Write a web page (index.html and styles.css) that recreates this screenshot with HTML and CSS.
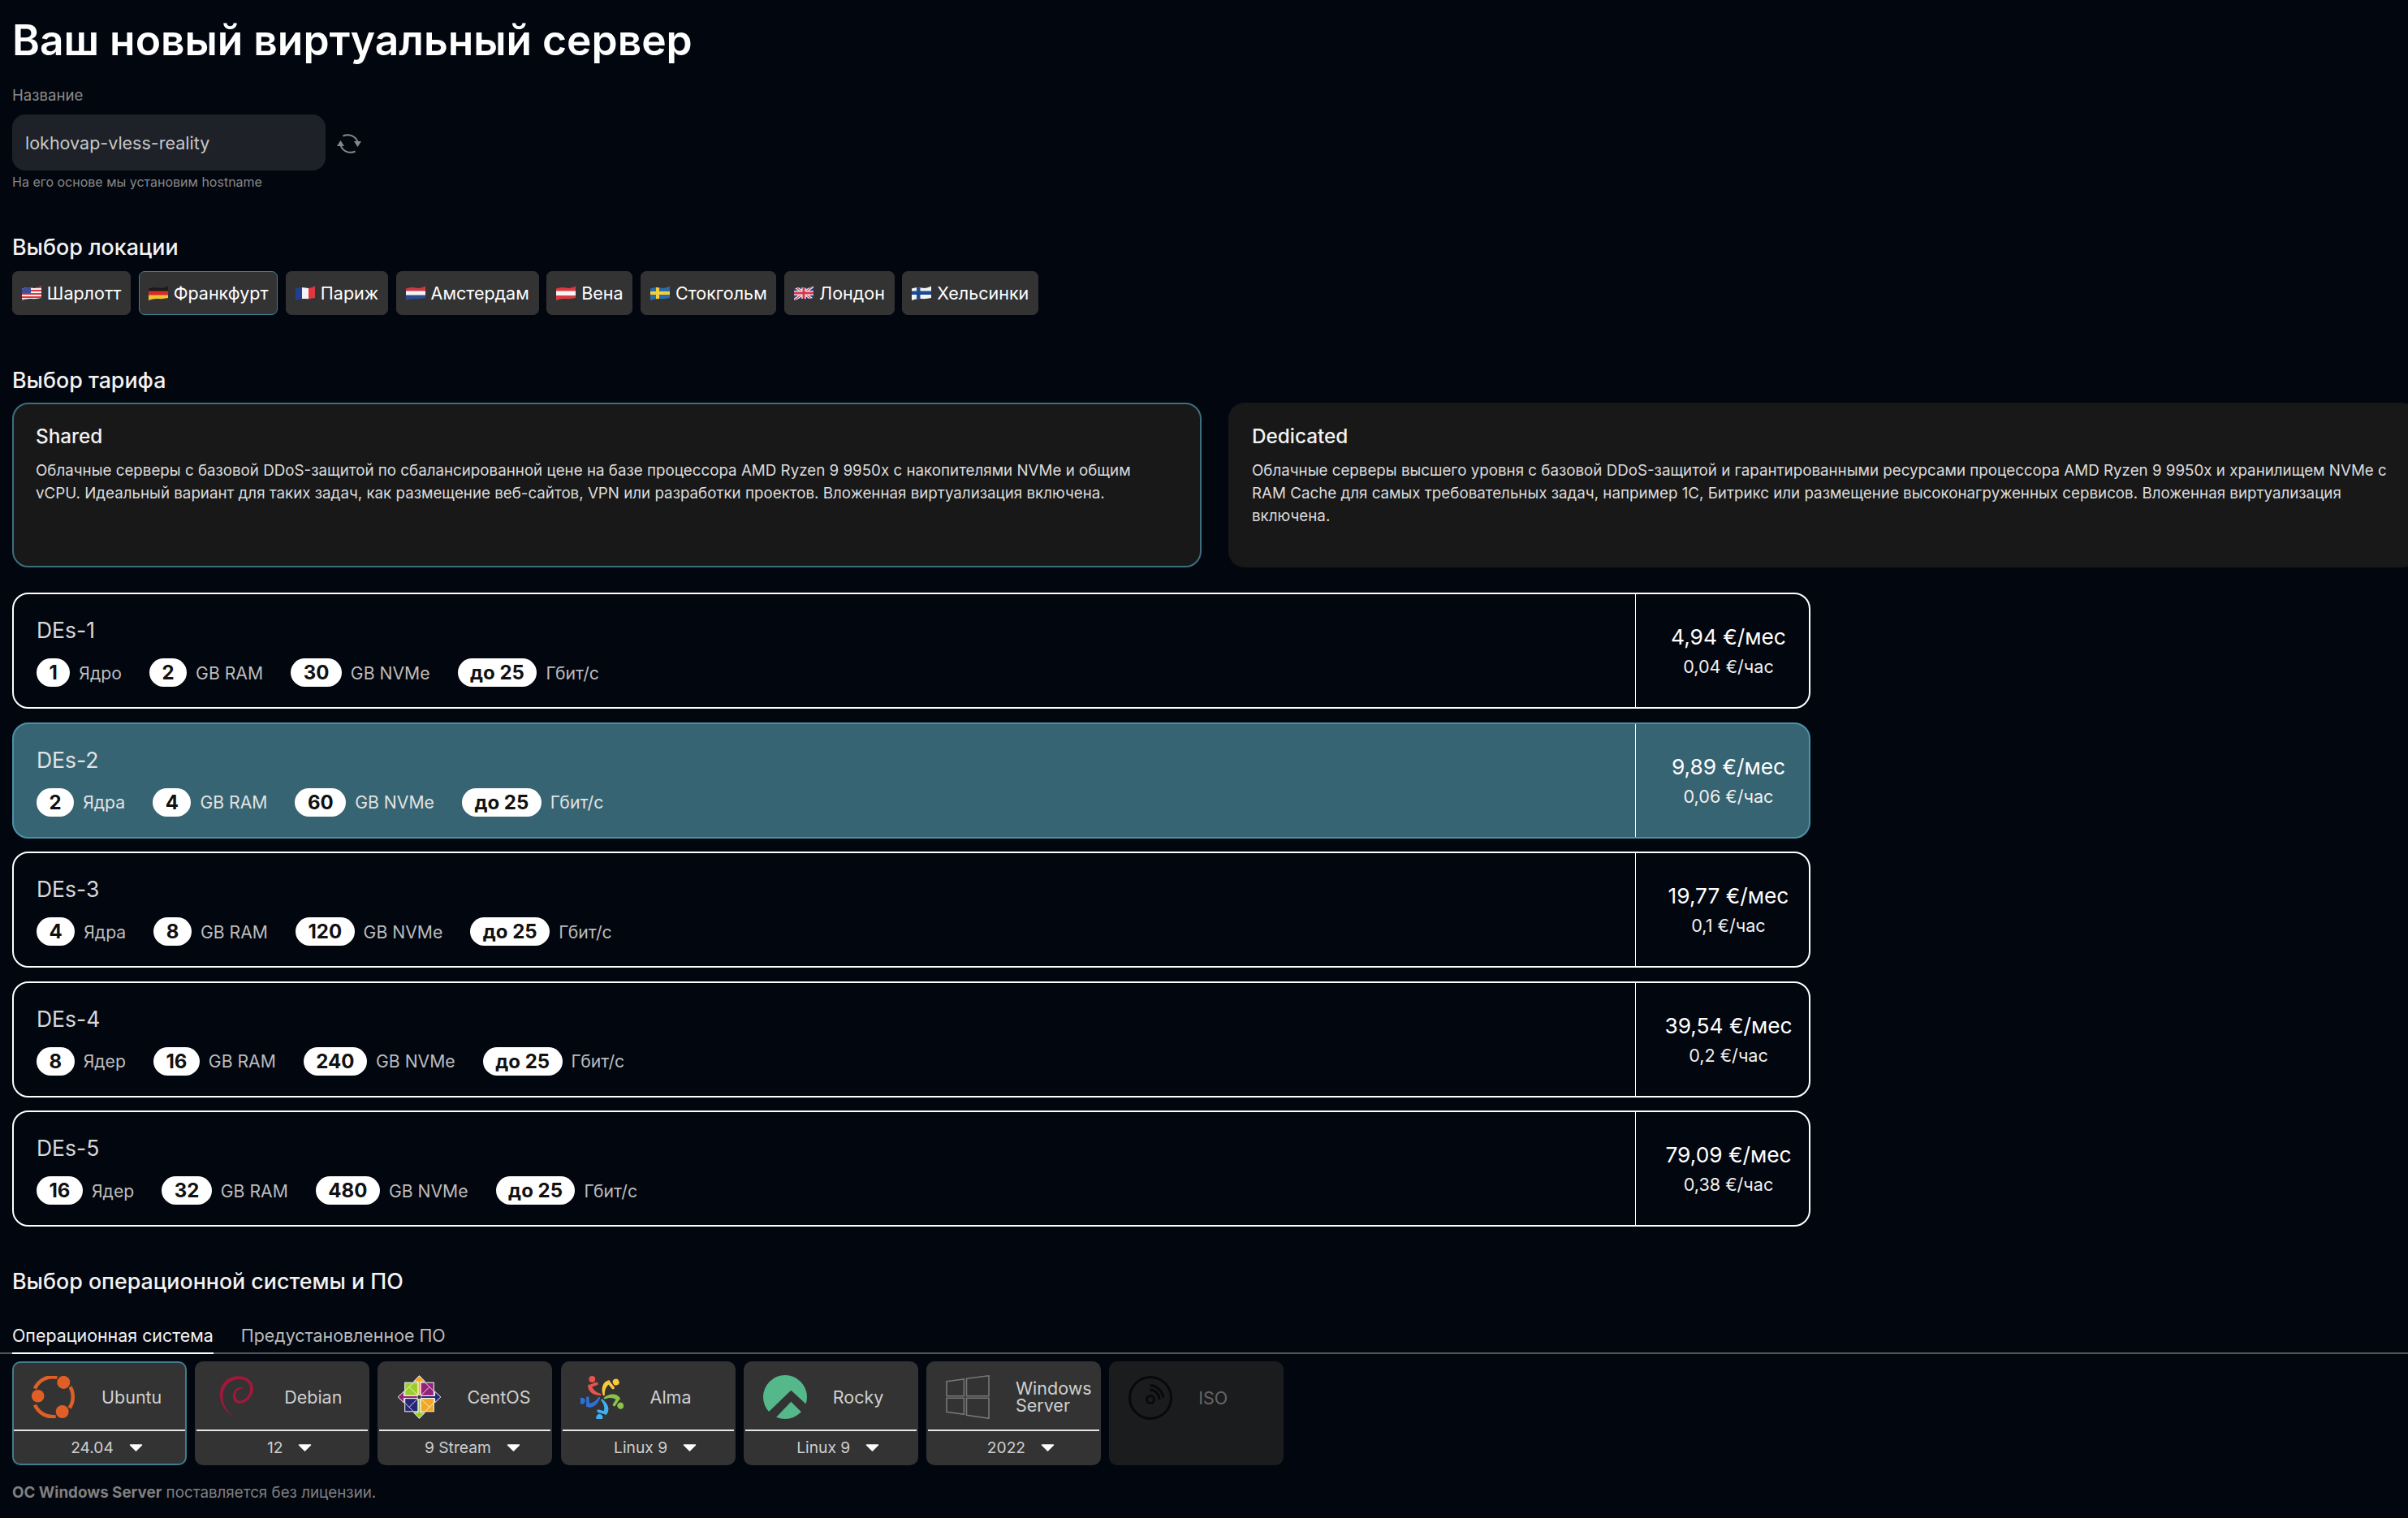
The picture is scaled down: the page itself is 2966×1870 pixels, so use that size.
FILE: index.html
```html
<!DOCTYPE html>
<html lang="ru">
<head>
<meta charset="utf-8">
<title>Ваш новый виртуальный сервер</title>
<link rel="stylesheet" href="styles.css">
</head>
<body>
<svg class="defs" width="0" height="0"><defs>
<clipPath id="wave"><path d="M0 3.5Q6 1 12 2.5T24 .5V15Q18 16.5 12 16T0 18Z"/></clipPath>
</defs></svg>
<main class="page">
  <h1 class="title">Ваш новый виртуальный сервер</h1>
  <div class="field-label">Название</div>
  <div class="name-row">
    <div class="name-input">lokhovap-vless-reality</div>
    <svg class="refresh" viewBox="0 0 30 28" width="30" height="28" fill="none" stroke="#888" stroke-width="2">
      <path d="M7.500 4.500A13 13 0 0 1 25.500 12"/>
      <path d="M4.500 16A13 13 0 0 0 22.500 23.500"/>
      <path d="M0 17h9L4.500 10z" fill="#888" stroke="none"/>
      <path d="M21 11h9L25.500 18z" fill="#888" stroke="none"/>
    </svg>
  </div>
  <div class="hint">На его основе мы установим hostname</div>

  <h2 class="section section-loc">Выбор локации</h2>
  <div class="locations">
    <div class="loc"><svg class="flag" viewBox="0 0 24 18"><g clip-path="url(#wave)"><rect width="24" height="18" fill="#f3f3f3"/><path d="M0 1h24v2H0zM0 5h24v2H0zM0 9h24v2H0zM0 13h24v2H0zM0 16.500h24v2H0z" fill="#d8383f"/><rect width="11" height="9.500" fill="#3d4f97"/></g></svg>Шарлотт</div>
    <div class="loc loc-active"><svg class="flag" viewBox="0 0 24 18"><g clip-path="url(#wave)"><rect width="24" height="7" fill="#1c1c1c"/><rect y="6.500" width="24" height="5.500" fill="#d62b2b"/><rect y="11.500" width="24" height="7" fill="#f2c12e"/></g></svg>Франкфурт</div>
    <div class="loc"><svg class="flag" viewBox="0 0 24 18"><g clip-path="url(#wave)"><rect width="8" height="18" fill="#23408f"/><rect x="8" width="8" height="18" fill="#f5f5f5"/><rect x="16" width="8" height="18" fill="#e0363f"/></g></svg>Париж</div>
    <div class="loc"><svg class="flag" viewBox="0 0 24 18"><g clip-path="url(#wave)"><rect width="24" height="7" fill="#c93a45"/><rect y="6.500" width="24" height="5.500" fill="#f5f5f5"/><rect y="11.500" width="24" height="7" fill="#2f4b8f"/></g></svg>Амстердам</div>
    <div class="loc"><svg class="flag" viewBox="0 0 24 18"><g clip-path="url(#wave)"><rect width="24" height="18" fill="#db3a3f"/><rect y="6.500" width="24" height="5.500" fill="#f5f5f5"/></g></svg>Вена</div>
    <div class="loc"><svg class="flag" viewBox="0 0 24 18"><g clip-path="url(#wave)"><rect width="24" height="18" fill="#2a6cab"/><rect x="7" width="4" height="18" fill="#f5cf3a"/><rect y="7" width="24" height="4" fill="#f5cf3a"/></g></svg>Стокгольм</div>
    <div class="loc"><svg class="flag" viewBox="0 0 24 18"><g clip-path="url(#wave)"><rect width="24" height="18" fill="#2b3f86"/><path d="M0 0L24 18M24 0L0 18" stroke="#f2f2f2" stroke-width="3.500"/><path d="M0 0L24 18M24 0L0 18" stroke="#d8384a" stroke-width="1.200"/><path d="M12 0V18M0 9H24" stroke="#f2f2f2" stroke-width="5.500"/><path d="M12 0V18M0 9H24" stroke="#d8384a" stroke-width="3"/></g></svg>Лондон</div>
    <div class="loc"><svg class="flag" viewBox="0 0 24 18"><g clip-path="url(#wave)"><rect width="24" height="18" fill="#f3f3f3"/><rect x="6" width="4.500" height="18" fill="#1f4a8f"/><rect y="6.500" width="24" height="4.500" fill="#1f4a8f"/></g></svg>Хельсинки</div>
  </div>

  <h2 class="section section-tariff">Выбор тарифа</h2>
  <div class="tariffs">
    <div class="tariff tariff-active">
      <div class="tariff-name">Shared</div>
      <p class="tariff-text">Облачные серверы с базовой DDoS-защитой по сбалансированной цене на базе процессора AMD Ryzen 9 9950x с накопителями NVMe и общим vCPU. Идеальный вариант для таких задач, как размещение веб-сайтов, VPN или разработки проектов. Вложенная виртуализация включена.</p>
    </div>
    <div class="tariff">
      <div class="tariff-name">Dedicated</div>
      <p class="tariff-text">Облачные серверы высшего уровня с базовой DDoS-защитой и гарантированными ресурсами процессора AMD Ryzen 9 9950x и хранилищем NVMe с RAM Cache для самых требовательных задач, например 1С, Битрикс или размещение высоконагруженных сервисов. Вложенная виртуализация включена.</p>
    </div>
  </div>

  <div class="plans">
    <div class="plan">
      <div class="plan-main">
        <div class="plan-name">DEs-1</div>
        <div class="specs">
          <div class="spec"><span class="pill">1</span>Ядро</div>
          <div class="spec"><span class="pill">2</span>GB RAM</div>
          <div class="spec"><span class="pill">30</span>GB NVMe</div>
          <div class="spec"><span class="pill">до 25</span>Гбит/с</div>
        </div>
      </div>
      <div class="plan-price"><div class="month">4,94 €/мес</div><div class="hour">0,04 €/час</div></div>
    </div>
    <div class="plan plan-active">
      <div class="plan-main">
        <div class="plan-name">DEs-2</div>
        <div class="specs">
          <div class="spec"><span class="pill">2</span>Ядра</div>
          <div class="spec"><span class="pill">4</span>GB RAM</div>
          <div class="spec"><span class="pill">60</span>GB NVMe</div>
          <div class="spec"><span class="pill">до 25</span>Гбит/с</div>
        </div>
      </div>
      <div class="plan-price"><div class="month">9,89 €/мес</div><div class="hour">0,06 €/час</div></div>
    </div>
    <div class="plan">
      <div class="plan-main">
        <div class="plan-name">DEs-3</div>
        <div class="specs">
          <div class="spec"><span class="pill">4</span>Ядра</div>
          <div class="spec"><span class="pill">8</span>GB RAM</div>
          <div class="spec"><span class="pill">120</span>GB NVMe</div>
          <div class="spec"><span class="pill">до 25</span>Гбит/с</div>
        </div>
      </div>
      <div class="plan-price"><div class="month">19,77 €/мес</div><div class="hour">0,1 €/час</div></div>
    </div>
    <div class="plan">
      <div class="plan-main">
        <div class="plan-name">DEs-4</div>
        <div class="specs">
          <div class="spec"><span class="pill">8</span>Ядер</div>
          <div class="spec"><span class="pill">16</span>GB RAM</div>
          <div class="spec"><span class="pill">240</span>GB NVMe</div>
          <div class="spec"><span class="pill">до 25</span>Гбит/с</div>
        </div>
      </div>
      <div class="plan-price"><div class="month">39,54 €/мес</div><div class="hour">0,2 €/час</div></div>
    </div>
    <div class="plan">
      <div class="plan-main">
        <div class="plan-name">DEs-5</div>
        <div class="specs">
          <div class="spec"><span class="pill">16</span>Ядер</div>
          <div class="spec"><span class="pill">32</span>GB RAM</div>
          <div class="spec"><span class="pill">480</span>GB NVMe</div>
          <div class="spec"><span class="pill">до 25</span>Гбит/с</div>
        </div>
      </div>
      <div class="plan-price"><div class="month">79,09 €/мес</div><div class="hour">0,38 €/час</div></div>
    </div>
  </div>

  <h2 class="section section-os">Выбор операционной системы и ПО</h2>
  <div class="tabs">
    <div class="tab tab-active">Операционная система</div>
    <div class="tab">Предустановленное ПО</div>
  </div>
  <div class="os-list">
    <div class="os os-active">
      <div class="os-top">
        <div class="os-icon"><svg viewBox="0 0 54 52" width="54" height="52" fill="none" stroke="#e05f26" stroke-width="4.500"><path d="M47.500 13.450A24.500 24.500 0 0 1 46.600 39.400"/><path d="M29.700 50A24.500 24.500 0 0 1 3.900 35.700"/><path d="M3.900 15.700A24.500 24.500 0 0 1 31.400 1.700"/><g fill="#e05f26" stroke="none"><circle cx="7.700" cy="24.700" r="7.800"/><circle cx="39.300" cy="7.900" r="8"/><circle cx="37.700" cy="44" r="8"/></g></svg></div>
        <div class="os-name">Ubuntu</div>
      </div>
      <div class="os-ver">24.04<svg class="caret" viewBox="0 0 17 9" width="17" height="9"><path d="M1.500 1h14L8.500 8z" fill="#fff" stroke="#fff" stroke-width="1.500" stroke-linejoin="round"/></svg></div>
    </div>
    <div class="os">
      <div class="os-top">
        <div class="os-icon"><svg viewBox="85 75 130 165" width="43" height="55"><path d="M158 236C120 225 88 190 88 148C88 105 120 78 155 78C190 78 213 100 212 125C211 155 185 180 160 180C145 180 135 165 136 150C137 135 150 120 165 120C172 120 178 125 178 125C170 122 155 125 148 137C142 148 146 165 160 170C180 172 200 150 200 125C200 100 180 88 155 90C125 92 100 115 98 150C96 190 125 225 158 236Z" fill="#a3183a"/></svg></div>
        <div class="os-name">Debian</div>
      </div>
      <div class="os-ver">12<svg class="caret" viewBox="0 0 17 9" width="17" height="9"><path d="M1.500 1h14L8.500 8z" fill="#fff" stroke="#fff" stroke-width="1.500" stroke-linejoin="round"/></svg></div>
    </div>
    <div class="os">
      <div class="os-top">
        <div class="os-icon"><svg viewBox="-80 -82 160 164" width="53" height="54" stroke="#fff" stroke-width="3">
          <g><polygon points="0,-80 -21,-58 -21,-58 -5,-58 -5,-5 0,0 5,-5 5,-58 21,-58" fill="#efa724"/><rect x="-54" y="-54" width="49" height="49" fill="#9ccd2a"/><path d="M-54 -22L-22 -54M-5 -5L-38 -38" fill="none" stroke-width="2.500"/></g>
          <g transform="rotate(90)"><polygon points="0,-80 -21,-58 -21,-58 -5,-58 -5,-5 0,0 5,-5 5,-58 21,-58" fill="#262577"/><rect x="-54" y="-54" width="49" height="49" fill="#932279"/><path d="M-54 -22L-22 -54M-5 -5L-38 -38" fill="none" stroke-width="2.500"/></g>
          <g transform="rotate(180)"><polygon points="0,-80 -21,-58 -21,-58 -5,-58 -5,-5 0,0 5,-5 5,-58 21,-58" fill="#9ccd2a"/><rect x="-54" y="-54" width="49" height="49" fill="#efa724"/><path d="M-54 -22L-22 -54M-5 -5L-38 -38" fill="none" stroke-width="2.500"/></g>
          <g transform="rotate(270)"><polygon points="0,-80 -21,-58 -21,-58 -5,-58 -5,-5 0,0 5,-5 5,-58 21,-58" fill="#932279"/><rect x="-54" y="-54" width="49" height="49" fill="#262577"/><path d="M-54 -22L-22 -54M-5 -5L-38 -38" fill="none" stroke-width="2.500"/></g>
          <rect x="-7" y="-7" width="14" height="14" fill="#333" stroke="#fff" stroke-width="2"/>
        </svg></div>
        <div class="os-name">CentOS</div>
      </div>
      <div class="os-ver">9 Stream<svg class="caret" viewBox="0 0 17 9" width="17" height="9"><path d="M1.500 1h14L8.500 8z" fill="#fff" stroke="#fff" stroke-width="1.500" stroke-linejoin="round"/></svg></div>
    </div>
    <div class="os">
      <div class="os-top">
        <div class="os-icon"><svg viewBox="-80 -82 160 164" width="53" height="54" fill="none" stroke-linecap="round">
          <g stroke="#e8534c" fill="#e8534c"><circle cx="-37" cy="-67" r="12" stroke="none"/><path d="M-3 -6C-30 -4 -56 -20 -52 -46L-38 -46C-38 -30 -22 -16 -3 -12Z" stroke="none"/><path d="M-42 -42L-20 -50" stroke-width="11" fill="none"/></g>
          <g transform="rotate(72)" stroke="#fbc83c" fill="#fbc83c"><circle cx="-37" cy="-67" r="12" stroke="none"/><path d="M-3 -6C-30 -4 -56 -20 -52 -46L-38 -46C-38 -30 -22 -16 -3 -12Z" stroke="none"/><path d="M-42 -42L-20 -50" stroke-width="11" fill="none"/></g>
          <g transform="rotate(144)" stroke="#8bc34a" fill="#8bc34a"><circle cx="-37" cy="-67" r="12" stroke="none"/><path d="M-3 -6C-30 -4 -56 -20 -52 -46L-38 -46C-38 -30 -22 -16 -3 -12Z" stroke="none"/><path d="M-42 -42L-20 -50" stroke-width="11" fill="none"/></g>
          <g transform="rotate(216)" stroke="#3fb0f2" fill="#3fb0f2"><circle cx="-37" cy="-67" r="12" stroke="none"/><path d="M-3 -6C-30 -4 -56 -20 -52 -46L-38 -46C-38 -30 -22 -16 -3 -12Z" stroke="none"/><path d="M-42 -42L-20 -50" stroke-width="11" fill="none"/></g>
          <g transform="rotate(288)" stroke="#2f6fd8" fill="#2f6fd8"><circle cx="-37" cy="-67" r="12" stroke="none"/><path d="M-3 -6C-30 -4 -56 -20 -52 -46L-38 -46C-38 -30 -22 -16 -3 -12Z" stroke="none"/><path d="M-42 -42L-20 -50" stroke-width="11" fill="none"/></g>
        </svg></div>
        <div class="os-name">Alma</div>
      </div>
      <div class="os-ver">Linux 9<svg class="caret" viewBox="0 0 17 9" width="17" height="9"><path d="M1.500 1h14L8.500 8z" fill="#fff" stroke="#fff" stroke-width="1.500" stroke-linejoin="round"/></svg></div>
    </div>
    <div class="os">
      <div class="os-top">
        <div class="os-icon"><svg viewBox="117 74 162 162" width="54" height="54"><circle cx="198" cy="155" r="81" fill="#55b88b"/><polygon points="135,212 220,130 285,190 260,212 220,172 160,235 135,240" fill="#333"/></svg></div>
        <div class="os-name">Rocky</div>
      </div>
      <div class="os-ver">Linux 9<svg class="caret" viewBox="0 0 17 9" width="17" height="9"><path d="M1.500 1h14L8.500 8z" fill="#fff" stroke="#fff" stroke-width="1.500" stroke-linejoin="round"/></svg></div>
    </div>
    <div class="os">
      <div class="os-top">
        <div class="os-icon"><svg viewBox="0 0 54 54" width="54" height="54" fill="none" stroke="#777" stroke-width="1.600"><path d="M1 7.700L22.400 5V25.700H1z"/><path d="M25.500 4.300L53 .8V25.700H25.500z"/><path d="M1 28.300H22.400V48.300L1 45.300z"/><path d="M25.500 28.300H53V53.300L25.500 49.300z"/></svg></div>
        <div class="os-name os-name-two">Windows Server</div>
      </div>
      <div class="os-ver">2022<svg class="caret" viewBox="0 0 17 9" width="17" height="9"><path d="M1.500 1h14L8.500 8z" fill="#fff" stroke="#fff" stroke-width="1.500" stroke-linejoin="round"/></svg></div>
    </div>
    <div class="os os-disabled">
      <div class="os-top">
        <div class="os-icon"><svg viewBox="0 0 54 54" width="54" height="54" fill="none" stroke="#08090b" stroke-width="3"><circle cx="27" cy="27" r="25.500"/><circle cx="27" cy="29" r="4.500" stroke-width="2.800"/><path d="M26 17a12 12 0 0 1 12 12"/><path d="M27 11.500a18 18 0 0 1 16 15"/></svg></div>
        <div class="os-name">ISO</div>
      </div>
    </div>
  </div>
  <p class="note"><b>ОС Windows Server</b> поставляется без лицензии.</p>
</main>
</body>
</html>
```
FILE: styles.css
```css
* { box-sizing: border-box; }
html, body { margin: 0; padding: 0; background: #02060f; overflow: hidden; }
body { width: 2966px; height: 1870px; font-family: Inter, "Noto Sans", sans-serif; color: #fff; }
.defs { position: absolute; }
.page { padding: 19px 0 0 15px; width: 2966px; }
.title { margin: 0; font-size: 51.500px; line-height: 60px; font-weight: 600; }
.field-label { margin-top: 26px; font-size: 18.600px; line-height: 24px; color: #8a8a8a; }
.name-row { display: flex; align-items: center; margin-top: 12px; gap: 14px; }
.refresh { margin-top: 3px; }
.name-input { width: 386px; height: 69px; border-radius: 16px; background: #1e2128; padding: 0 16px; display: flex; align-items: center; font-size: 21.500px; color: #c8c8c8; }
.hint { margin-top: 4px; font-size: 16px; line-height: 20px; color: #888; }
.section { margin: 0; font-size: 26.800px; line-height: 34px; font-weight: 450; color: #f2f2f2; }
.section-loc { margin-top: 53px; }
.locations { display: flex; gap: 9.800px; margin-top: 13px; }
.loc { height: 54px; padding: 0 10.800px; background: #333; border: 1px solid #333; border-radius: 7px; display: flex; align-items: center; gap: 7px; font-size: 21.500px; color: #fff; }
.loc-active { border-color: #3f8090; }
.flag { width: 24px; height: 18px; flex: none; }
.section-tariff { margin-top: 63px; }
.tariffs { display: grid; grid-template-columns: 1465px 1465px; gap: 33px; margin-top: 11px; }
.tariff { height: 203px; background: #181818; border: 2px solid #181818; border-radius: 20px; padding: 24px 32px 24px 27px; }
.tariff-active { border-color: #3c6f80; }
.tariff-name { font-size: 24.300px; line-height: 30px; font-weight: 450; color: #f2f2f2; }
.tariff-text { margin: 14px 0 0; font-size: 18.750px; line-height: 28px; color: #dcdcdc; }
.plans { display: flex; flex-direction: column; gap: 16.500px; width: 2215px; margin-top: 31px; }
.plan { display: flex; height: 143px; border: 2px solid #fff; border-radius: 20px; }
.plan-active { background: #366472; border-color: #4a93a8; }
.plan-main { flex: 1; padding: 26px 0 0 28px; }
.plan-name { font-size: 26.500px; line-height: 36px; color: #d8d8d8; }
.specs { display: flex; gap: 34px; margin-top: 17px; }
.spec { display: flex; align-items: center; gap: 11px; font-size: 21.200px; color: #bcbcbc; }
.plan-active .plan-name, .plan-active .spec { color: #e2e2e2; }
.pill { height: 35px; padding: 0 15.500px; border-radius: 18px; background: #fff; color: #111; font-size: 24px; font-weight: 700; display: flex; align-items: center; }
.plan-price { width: 214px; border-left: 1px solid #fff; padding-left: 15px; display: flex; flex-direction: column; align-items: center; justify-content: center; gap: 3px; }
.month { font-size: 26.300px; line-height: 36px; color: #fff; white-space: nowrap; }
.hour { font-size: 21.600px; line-height: 30px; color: #f0f0f0; white-space: nowrap; }
.section-os { margin-top: 50px; }
.tabs { display: flex; gap: 34px; margin-top: 35px; height: 38px; border-bottom: 2px solid #555; margin-left: -15px; padding-left: 15px; }
.tab { height: 38px; font-size: 21.400px; line-height: 30px; color: #bbb; }
.tab-active { color: #f2f2f2; border-bottom: 2px solid #fff; }
.os-list { display: flex; gap: 10.200px; margin-top: 9px; }
.os { width: 215px; height: 128px; background: #333; border-radius: 10px; border: 2px solid #333; display: flex; flex-direction: column; }
.os-active { border-color: #3f7d8d; }
.os-disabled { background: #1b1c1e; border-color: #1b1c1e; }
.os-top { height: 84px; padding-top: 2px; display: flex; align-items: center; border-bottom: 2px solid #e6e6e6; }
.os-disabled .os-top { border-bottom: 0; }
.os-icon { width: 108px; padding-right: 10px; display: flex; justify-content: center; flex: none; }
.os-name { font-size: 21.500px; line-height: 21px; color: #cfcfcf; }
.os-name-two { width: 90px; }
.os-disabled .os-name { color: #666; }
.os-ver { flex: 1; display: flex; align-items: center; justify-content: center; padding-left: 18px; gap: 19px; font-size: 19.200px; color: #cfcfcf; }
.caret { flex: none; }
.note { margin: 22px 0 0; font-size: 18.800px; line-height: 24px; color: #808080; }
.note b { font-weight: 700; }
```
